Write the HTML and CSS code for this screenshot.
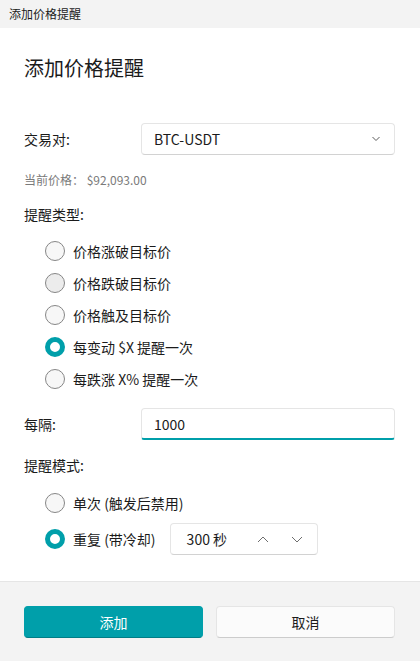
FILE: index.html
```html
<!DOCTYPE html>
<html>

<head>
    <title>添加价格提醒</title>
    <link rel="stylesheet" href="styles.css">
    <meta name="viewport" content="width=device-width, initial-scale=1">
</head>

<body>
    <div class="titlebar">添加价格提醒</div>
    <div class="content">
        <h1 class="heading">添加价格提醒</h1>

        <div class="field-row pair-row">
            <span class="label">交易对:</span>
            <div class="combo">
                <span>BTC-USDT</span>
                <svg class="chevron" width="10" height="6" viewBox="0 0 10 6">
                    <polyline points="1.5,1 5,4.5 8.5,1" fill="none" stroke="#5c5c5c" stroke-width="1"/>
                </svg>
            </div>
        </div>
        <div class="price">当前价格： $92,093.00</div>

        <div class="section-title type-title">提醒类型:</div>
        <div class="radio-list">
            <label class="radio-row"><span class="radio"></span>价格涨破目标价</label>
            <label class="radio-row"><span class="radio hover"></span>价格跌破目标价</label>
            <label class="radio-row"><span class="radio"></span>价格触及目标价</label>
            <label class="radio-row"><span class="radio checked"></span>每变动 $X 提醒一次</label>
            <label class="radio-row"><span class="radio"></span>每跌涨 X% 提醒一次</label>
        </div>

        <div class="field-row every-row">
            <span class="label">每隔:</span>
            <div class="textbox">1000</div>
        </div>

        <div class="section-title mode-title">提醒模式:</div>
        <div class="mode-list">
            <label class="radio-row"><span class="radio"></span>单次 (触发后禁用)</label>
            <div class="radio-row repeat-row">
                <label class="radio-label"><span class="radio checked"></span>重复 (带冷却)</label>
                <div class="spinbox">
                    <span class="spin-value">300 秒</span>
                    <svg class="spin-btn" width="12" height="7" viewBox="0 0 12 7">
                        <polyline points="1,6 6,1 11,6" fill="none" stroke="#6e6e6e" stroke-width="1"/>
                    </svg>
                    <svg class="spin-btn" width="12" height="7" viewBox="0 0 12 7">
                        <polyline points="1,1 6,6 11,1" fill="none" stroke="#6e6e6e" stroke-width="1"/>
                    </svg>
                </div>
            </div>
        </div>
    </div>
    <div class="footer">
        <button class="btn btn-primary">添加</button>
        <button class="btn">取消</button>
    </div>
</body>

</html>
```

FILE: styles.css
```css
html,
body {
    margin: 0;
    height: 100%;
}

body {
    display: flex;
    flex-direction: column;
    font-family: "Noto Sans CJK SC", "Noto Sans", sans-serif;
    font-size: 14px;
    color: #1b1b1b;
    background: #ffffff;
}

.titlebar {
    height: 28px;
    line-height: 28px;
    padding-left: 9px;
    font-size: 12px;
    background: #f3f3f3;
}

.content {
    flex: 1;
    padding: 0 25px 0 24px;
}

.heading {
    margin: 26px 0 0;
    font-size: 20px;
    font-weight: normal;
    line-height: 28px;
}

.field-row {
    display: flex;
    align-items: center;
    height: 32px;
}

.pair-row {
    margin-top: 41px;
}

.label {
    width: 117px;
    flex-shrink: 0;
}

.combo,
.textbox,
.spinbox {
    box-sizing: border-box;
    height: 32px;
    border: 1px solid #e5e5e5;
    border-bottom-color: #d2d2d2;
    border-radius: 4px;
    background: #ffffff;
    display: flex;
    align-items: center;
}

.combo {
    flex: 1;
    padding: 0 12px;
    justify-content: space-between;
}

.chevron {
    margin-right: 1px;
}

.price {
    margin-top: 17px;
    font-size: 12px;
    line-height: 16px;
    color: #7a7a7a;
}

.section-title {
    line-height: 20px;
}

.type-title {
    margin-top: 16px;
}

.radio-list {
    margin-top: 11px;
    padding-left: 21px;
}

.radio-row {
    display: flex;
    align-items: center;
    height: 32px;
}

.radio-label {
    display: flex;
    align-items: center;
}

.radio {
    box-sizing: border-box;
    width: 20px;
    height: 20px;
    margin-right: 8px;
    border: 1px solid #868686;
    border-radius: 50%;
    background: #f7f7f7;
}

.radio.hover {
    background: #ececec;
}

.radio.checked {
    border: 5px solid #009faa;
    background: #ffffff;
}

.every-row {
    margin-top: 13px;
}

.textbox {
    flex: 1;
    padding: 0 12px;
    border-bottom: 2px solid #009faa;
    border-radius: 4px 4px 3px 3px;
}

.mode-title {
    margin-top: 15px;
}

.mode-list {
    margin-top: 12px;
    padding-left: 21px;
}

.repeat-row {
    margin-top: 4px;
}

.spinbox {
    width: 148px;
    margin-left: 14px;
    padding: 0 14px 0 16px;
}

.spin-value {
    flex: 1;
}

.spin-btn {
    margin-left: 22px;
}

.footer {
    display: grid;
    grid-template-columns: 1fr 1fr;
    gap: 13px;
    height: 80px;
    box-sizing: border-box;
    padding: 24px 25px 0 24px;
    background: #f3f3f3;
    border-top: 1px solid #e5e5e5;
}

.btn {
    height: 32px;
    font-family: inherit;
    font-size: 14px;
    color: #1b1b1b;
    background: #fbfbfb;
    border: 1px solid #e5e5e5;
    border-bottom-color: #cccccc;
    border-radius: 4px;
}

.btn-primary {
    color: #ffffff;
    background: #009faa;
    border-color: #009faa;
    border-bottom-color: #007d86;
}
```
